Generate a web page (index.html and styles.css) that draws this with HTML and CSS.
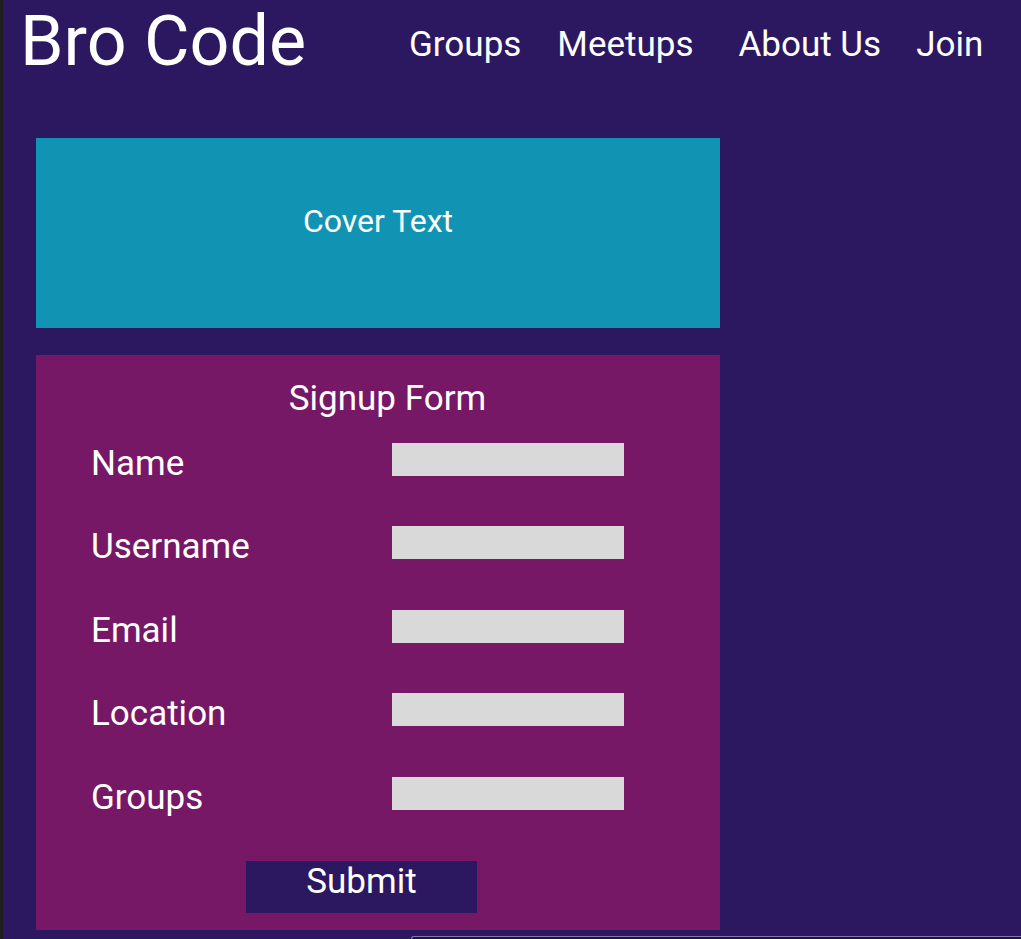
FILE: index.html
```html
<!DOCTYPE html>
<html lang="en">
<head>
<meta charset="utf-8">
<title>Bro Code</title>
<link rel="stylesheet" href="styles.css">
</head>
<body>
<div class="page">
  <header class="header">
    <div class="brand">Bro Code</div>
    <nav class="nav">
      <a class="nav-link" href="#">Groups</a>
      <a class="nav-link" href="#">Meetups</a>
      <a class="nav-link nav-link--wide" href="#">About Us</a>
      <a class="nav-link" href="#">Join</a>
    </nav>
  </header>
  <main class="main">
    <section class="cover">Cover Text</section>
    <form class="signup">
      <h2 class="signup-title">Signup Form</h2>
      <div class="rows">
        <div class="row"><label class="row-label">Name</label><input class="row-input" type="text"></div>
        <div class="row"><label class="row-label">Username</label><input class="row-input" type="text"></div>
        <div class="row"><label class="row-label">Email</label><input class="row-input" type="text"></div>
        <div class="row"><label class="row-label">Location</label><input class="row-input" type="text"></div>
        <div class="row"><label class="row-label">Groups</label><input class="row-input" type="text"></div>
      </div>
      <button class="submit" type="button">Submit</button>
    </form>
    <div class="dock"></div>
  </main>
</div>
</body>
</html>
```
FILE: styles.css
```css
html {
  background: #2c1761;
}
body {
  margin: 0;
  font-family: Roboto, "Liberation Sans", sans-serif;
  color: #ffffff;
}
.page {
  height: 939px;
  overflow: hidden;
  border-left: 3px solid #1f1f22;
  background: #2c1761;
}
.header {
  display: flex;
  align-items: flex-start;
  height: 82px;
  padding-left: 17px;
}
.brand {
  font-size: 70px;
  line-height: normal;
}
.nav {
  display: flex;
  margin-left: 103px;
  padding-top: 24px;
  gap: 36px;
}
.nav-link {
  color: #ffffff;
  text-decoration: none;
  font-size: 35px;
  line-height: normal;
}
.nav-link--wide {
  margin-left: 9px;
  margin-right: -1px;
}
.main {
  padding: 56px 0 0 33px;
}
.cover {
  box-sizing: border-box;
  width: 684px;
  height: 190px;
  padding-top: 64px;
  background: #1194b4;
  text-align: center;
  font-size: 32px;
  line-height: normal;
}
.signup {
  box-sizing: border-box;
  width: 684px;
  margin-top: 27px;
  padding: 22.5px 0 17px 55px;
  background: #761866;
}
.signup-title {
  margin: 0;
  padding-left: 18px;
  padding-right: 54px;
  font-size: 35px;
  font-weight: 400;
  line-height: normal;
  text-align: center;
}
.rows {
  display: flex;
  flex-direction: column;
  gap: 42.5px;
  margin-top: 24px;
}
.row {
  display: flex;
  align-items: flex-start;
  height: 41px;
}
.row-label {
  width: 301px;
  font-size: 35px;
  line-height: normal;
}
.row-input {
  box-sizing: border-box;
  width: 232px;
  height: 33px;
  margin: 0;
  padding: 0;
  border: none;
  background: #d9d9d9;
}
.submit {
  display: flex;
  justify-content: center;
  align-items: flex-start;
  box-sizing: border-box;
  width: 231px;
  height: 52px;
  margin: 43.5px 0 0 155px;
  padding: 0;
  border: none;
  background: #2c1761;
  color: #ffffff;
  font-family: Roboto, "Liberation Sans", sans-serif;
  font-size: 35px;
  line-height: normal;
}
.dock {
  margin: 6px 0 0 375px;
  height: 40px;
  border-top: 1px solid #8576ad;
  border-left: 1px solid #8576ad;
  border-top-left-radius: 3px;
  background: #1f0f47;
}
```
